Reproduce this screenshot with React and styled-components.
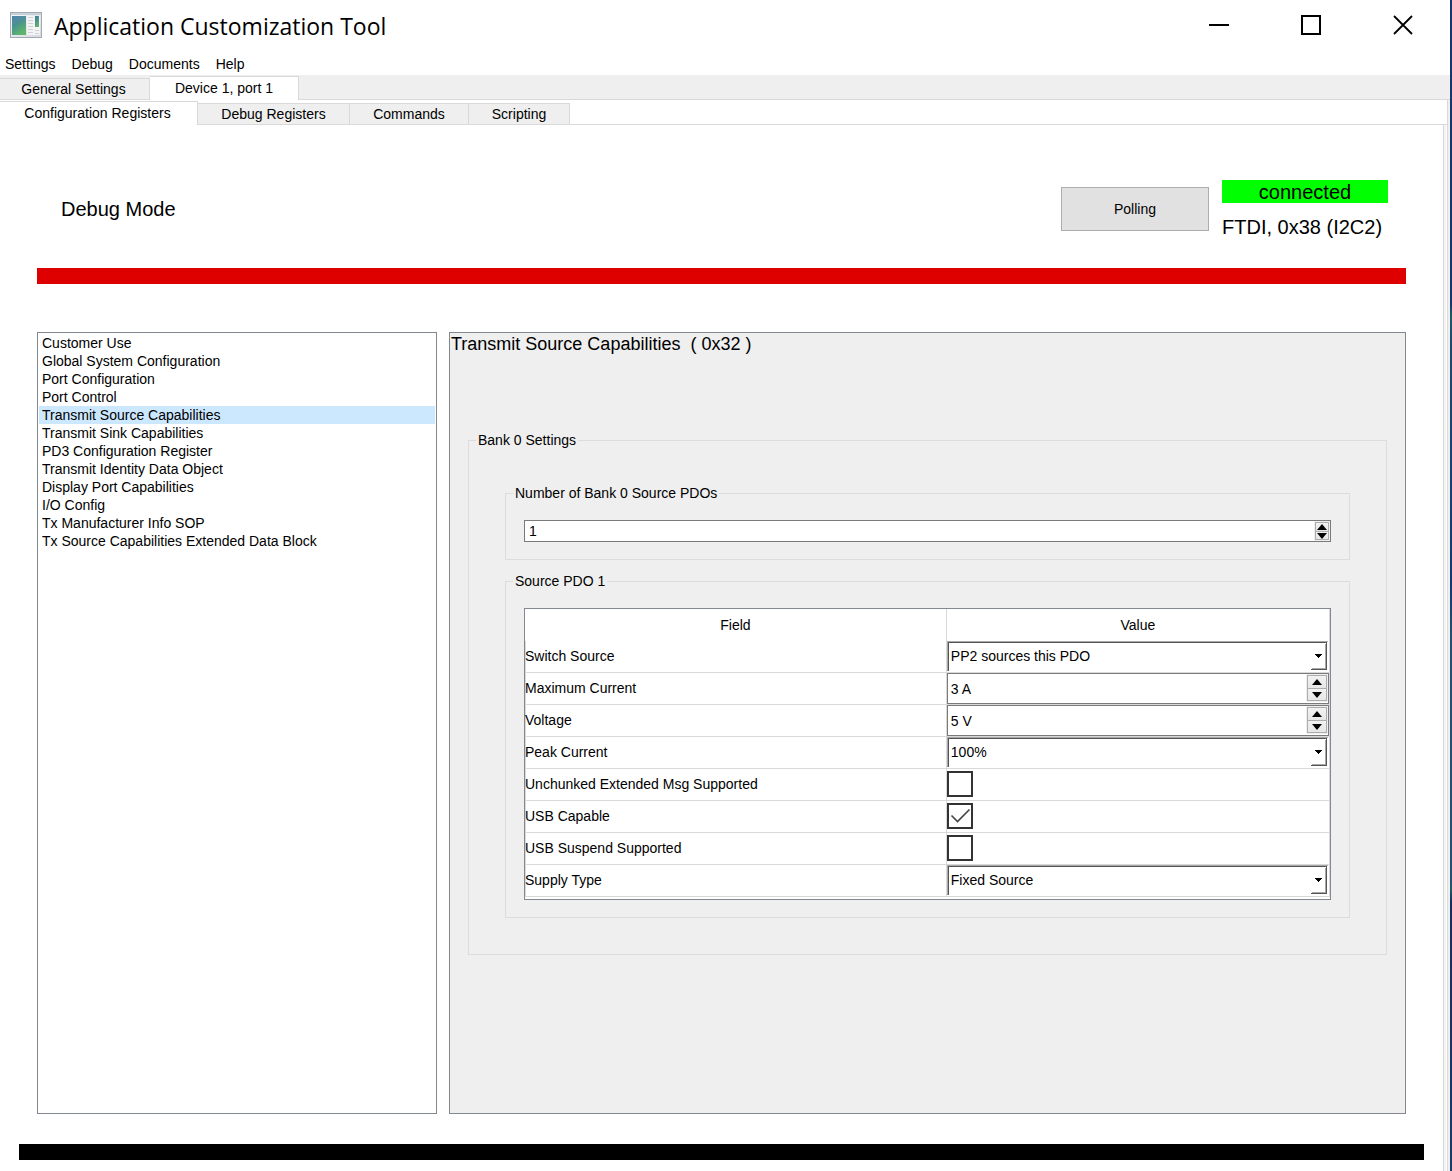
import React, { useState } from "react";
import styled, { createGlobalStyle, css } from "styled-components";

const line = "#d9d9d9";
const face = "#efefef";
const frame = "#828790";

const GlobalStyle = createGlobalStyle`
  * { box-sizing: border-box; }
  body { margin: 0; background: #fff; color: #000; }
  body, button, input, select { font-family: "Liberation Sans", Arial, sans-serif; font-size: 14px; }
  button, input, select { color: inherit; margin: 0; border-radius: 0; }
`;

const Desktop = styled.div`
  display: flex;
  min-height: 100vh;
`;
const Backdrop = styled.div`
  flex: 0 0 2px;
  background: linear-gradient(#17376b, #17376b 26%, #1f5a66 27%, #1d4a6e 29%, #14386f 50%, #254f70 54%, #254f70 75%, #1f5a66 76%, #15305f 77%, #1a3a68);
`;
const Window = styled.div`
  flex: 1;
  min-width: 0;
  display: flex;
  flex-direction: column;
`;

const TitleBar = styled.header`
  display: flex;
  align-items: center;
  height: 50px;
  padding: 0 1px 0 10px;
`;
const Title = styled.h1`
  flex: 1;
  margin: 0 0 0 12px;
  padding-top: 2px;
  font: 400 23px/32px "Open Sans", "Noto Sans", sans-serif;
`;
const Caption = styled.button`
  width: 92px;
  height: 50px;
  padding: 0;
  border: 0;
  background: none;
  svg { display: block; margin: 0 auto; }
`;

const MenuBar = styled.nav`
  display: flex;
  gap: 16px;
  height: 25px;
  padding: 4px 0 0 5px;
`;
const MenuItem = styled.button`
  padding: 0;
  border: 0;
  background: none;
  line-height: 21px;
`;

const TabStrip = styled.div`
  display: flex;
  align-items: flex-end;
  height: 25px;
  background: ${(p) => (p.$shaded ? face : "#fff")};
  box-shadow: inset 0 -1px ${line};
`;
const Tab = styled.button`
  width: ${(p) => p.$width}px;
  height: 22px;
  padding: 0;
  border: 1px solid ${line};
  border-left: 0;
  background: ${face};
  line-height: 20px;
  &:first-child { padding-right: 2px; }
  ${(p) => p.$active && css`
    height: 24px;
    padding-bottom: 2px;
    border-bottom: 0;
    background: #fff;
  `}
`;

const OuterPane = styled.div`
  flex: 1;
  display: flex;
  flex-direction: column;
  margin-right: 2px;
  border-right: 1px solid ${line};
  box-shadow: 2px 0 ${face};
`;
const InnerPane = styled.main`
  flex: 1;
  margin-right: 3px;
  padding: 55px 37px 11px;
  border-right: 1px solid ${line};
  box-shadow: 2px 0 #f3f3f3;
`;

const StatusRow = styled.section`
  display: flex;
  align-items: center;
  height: 58px;
  padding: 0 18px 0 24px;
`;
const Mode = styled.h2`
  flex: 1;
  margin: 0;
  font-size: 20px;
  font-weight: 400;
  line-height: 24px;
`;
const PollButton = styled.button`
  width: 148px;
  height: 44px;
  border: 1px solid #adadad;
  background: #e1e1e1;
`;
const Link = styled.div`
  display: flex;
  flex-direction: column;
  gap: 12px;
  min-width: 166px;
  margin-left: 13px;
  font-size: 20px;
  line-height: 21px;
  white-space: nowrap;
  span { padding-top: 2px; }
`;
const Connected = styled.span`
  background: #0f0;
  text-align: center;
`;
const RedBar = styled.div`
  height: 16px;
  margin-top: 30px;
  background: #de0000;
`;
const BlackBar = styled.footer`
  height: 16px;
  margin: 30px -18px 0;
  background: #000;
`;

const Columns = styled.div`
  display: flex;
  gap: 12px;
  margin-top: 48px;
`;
const RegisterList = styled.nav`
  flex: 0 0 400px;
  padding: 1px;
  border: 1px solid ${frame};
`;
const Register = styled.button`
  display: block;
  width: 100%;
  padding: 0 3px;
  border: 0;
  background: ${(p) => (p.$active ? "#cce8ff" : "none")};
  line-height: 18px;
  text-align: left;
`;
const Detail = styled.section`
  flex: 1;
  min-width: 0;
  min-height: 782px;
  border: 1px solid ${frame};
  background: ${face};
`;
const DetailTitle = styled.h2`
  margin: 0 0 77px;
  padding-left: 1px;
  font-size: 18px;
  font-weight: 400;
  line-height: 22px;
  white-space: pre;
`;
const DetailBody = styled.div`
  padding: 0 18px 18px;
`;

const Group = styled.fieldset`
  min-width: 0;
  margin: 0;
  padding: 0;
  border: 1px solid #dcdcdc;
  & + & { margin-top: 13px; }
`;
const Legend = styled.legend`
  margin-left: 7px;
  padding: 0 2px;
  line-height: 17px;
`;
const GroupBody = styled.div`
  padding: ${(p) => (p.$wide ? "36px" : "18px 18px 17px")};
`;

const SpinFrame = styled.div`
  display: flex;
  align-items: center;
  height: ${(p) => (p.$compact ? 22 : 31)}px;
  padding-right: 1px;
  border: 1px solid #7a7a7a;
  background: #fff;
`;
const SpinInput = styled.input`
  flex: 1;
  min-width: 0;
  height: 18px;
  padding: 0 0 0 ${(p) => (p.$compact ? 4 : 3)}px;
  border: 0;
  outline: 0;
  background: none;
`;
const Steps = styled.div`
  align-self: flex-start;
  display: flex;
  flex-direction: column;
  width: ${(p) => (p.$compact ? 14 : 20)}px;
  height: ${(p) => (p.$compact ? 18 : 26)}px;
  margin-top: 1px;
  border: 1px solid #adadad;
  background: ${face};
  box-shadow: 0 0 0 1px ${face};
`;
const Step = styled.button`
  flex: 0 0 50%;
  display: grid;
  place-items: center;
  min-height: 0;
  padding: 0;
  border: 0;
  background: linear-gradient(#f2f2f2, #e6e6e6);
  & + & { border-top: 1px solid #adadad; }
  svg { display: block; }
`;

const Grid = styled.table`
  width: 100%;
  table-layout: fixed;
  border-collapse: separate;
  border-spacing: 0;
  background: #fff;
`;
const GridFrame = styled.div`
  padding-bottom: 2px;
  border: 1px solid ${frame};
  background: #fff;
`;
const Head = styled.th`
  width: ${(p) => p.$width};
  height: 32px;
  padding: 0;
  border-right: 1px solid ${line};
  font-weight: 400;
`;
const NameCell = styled.td`
  height: 32px;
  padding: 0 0 1px;
  border-right: 1px solid ${line};
  border-bottom: 1px solid ${line};
  box-shadow: inset 1px 0 ${line};
`;
const ValueCell = styled.td`
  height: 32px;
  padding: 0;
  border-right: 1px solid ${line};
  border-bottom: 1px solid ${line};
  vertical-align: top;
`;

const ComboFrame = styled.div`
  display: grid;
  height: 30px;
  margin-right: 1px;
  border: solid #a8a8a8;
  border-width: 1px 0 0 1px;
`;
const Combo = styled.select`
  grid-area: 1 / 1;
  min-width: 0;
  margin-right: 1px;
  padding: 0 20px 3px 2px;
  border: solid #555;
  border-width: 1px 0 0 1px;
  outline: 0;
  appearance: none;
  background: #fff;
`;
const ComboButton = styled.svg`
  grid-area: 1 / 1;
  justify-self: end;
  margin-right: 1px;
  pointer-events: none;
`;

const CheckFrame = styled.div`
  display: grid;
  width: 26px;
  height: 26px;
  margin-top: 2px;
`;
const CheckInput = styled.input`
  grid-area: 1 / 1;
  width: 26px;
  height: 26px;
  appearance: none;
  border: 2px solid #333;
  background: #fff;
  & + svg { visibility: hidden; }
  &:checked + svg { visibility: visible; }
`;
const CheckMark = styled.svg`
  grid-area: 1 / 1;
  pointer-events: none;
`;

function AppIcon() {
  return (
    <svg width="32" height="26" viewBox="0 0 32 26" aria-hidden="true">
      <defs>
        <linearGradient id="screen" x1="0" y1="0" x2="0.5" y2="1">
          <stop offset="0" stopColor="#4477a0" />
          <stop offset="0.5" stopColor="#4a948c" />
          <stop offset="1" stopColor="#5fb56d" />
        </linearGradient>
        <linearGradient id="shell" x1="0" y1="0" x2="1" y2="1">
          <stop offset="0" stopColor="#f7f9fb" />
          <stop offset="1" stopColor="#d5d9de" />
        </linearGradient>
      </defs>
      <rect x="0.5" y="0.5" width="31" height="25" fill="url(#shell)" stroke="#a3aab1" />
      <rect x="1" y="1" width="30" height="2" fill="#c8d0d8" />
      <rect x="2" y="4" width="14" height="19" fill="url(#screen)" />
      <path d="M2 14C5 9 11 8 16 9V4H2Z" fill="#5b91ad" opacity="0.45" />
      <rect x="17" y="4" width="13" height="19" fill="#f4f4f5" />
      <path d="M18 5.5H23M18 8.5H23M18 11.5H23M18 14.5H23M18 17.5H23M18 20.5H23M25 18.5H29M25 21.5H29" stroke="#cfd2d5" />
      <rect x="25" y="4" width="4" height="11" fill="url(#screen)" />
    </svg>
  );
}

function Triangle({ down }) {
  return (
    <svg width="10" height="6" viewBox="0 0 10 6" aria-hidden="true">
      <path d={down ? "M0 0H10L5 6Z" : "M0 6H10L5 0Z"} />
    </svg>
  );
}

function SpinBox({ id, label, initial, unit = "", compact }) {
  const [value, setValue] = useState(initial);
  return (
    <SpinFrame $compact={compact}>
      <SpinInput
        id={id}
        $compact={compact}
        aria-label={label}
        value={`${value}${unit}`}
        onChange={(e) => setValue(parseInt(e.target.value, 10) || 0)}
      />
      <Steps $compact={compact}>
        <Step type="button" aria-label="Increase" onClick={() => setValue(value + 1)}><Triangle /></Step>
        <Step type="button" aria-label="Decrease" onClick={() => setValue(Math.max(0, value - 1))}><Triangle down /></Step>
      </Steps>
    </SpinFrame>
  );
}

function ComboBox({ id, text }) {
  return (
    <ComboFrame>
      <Combo id={id} defaultValue={text}>
        <option>{text}</option>
      </Combo>
      <ComboButton width="16" height="28" viewBox="0 0 16 28" aria-hidden="true">
        <path d="M14.5 2V27M1 26.5H15" fill="none" stroke="#a8a8a8" />
        <path d="M15.5 0V28M0 27.5H16" fill="none" stroke="#555" />
        <path d="M4 12H11V13H10V14H9V15H8V16H7V15H6V14H5V13H4Z" />
      </ComboButton>
    </ComboFrame>
  );
}

function CheckBox({ id, checked }) {
  return (
    <CheckFrame>
      <CheckInput id={id} type="checkbox" defaultChecked={checked} />
      <CheckMark width="26" height="26" viewBox="0 0 26 26" aria-hidden="true">
        <path d="M4.5 12.5L10.5 18.5L22.5 6.5" fill="none" stroke="#444" strokeWidth="1.6" />
      </CheckMark>
    </CheckFrame>
  );
}

const menus = ["Settings", "Debug", "Documents", "Help"];
const registers = [
  "Customer Use",
  "Global System Configuration",
  "Port Configuration",
  "Port Control",
  "Transmit Source Capabilities",
  "Transmit Sink Capabilities",
  "PD3 Configuration Register",
  "Transmit Identity Data Object",
  "Display Port Capabilities",
  "I/O Config",
  "Tx Manufacturer Info SOP",
  "Tx Source Capabilities Extended Data Block",
];
const fields = [
  { id: "switch", name: "Switch Source", combo: "PP2 sources this PDO" },
  { id: "current", name: "Maximum Current", spin: 3, unit: " A" },
  { id: "voltage", name: "Voltage", spin: 5, unit: " V" },
  { id: "peak", name: "Peak Current", combo: "100%" },
  { id: "unchunked", name: "Unchunked Extended Msg Supported", checked: false },
  { id: "usb", name: "USB Capable", checked: true },
  { id: "suspend", name: "USB Suspend Supported", checked: false },
  { id: "supply", name: "Supply Type", combo: "Fixed Source" },
];

function FieldEditor({ field }) {
  if (field.combo) return <ComboBox id={field.id} text={field.combo} />;
  if (field.spin) return <SpinBox id={field.id} initial={field.spin} unit={field.unit} />;
  return <CheckBox id={field.id} checked={field.checked} />;
}

export default function App() {
  const [selected, setSelected] = useState(registers[4]);
  return (
    <>
      <GlobalStyle />
      <Desktop>
        <Window>
          <TitleBar>
            <AppIcon />
            <Title>Application Customization Tool</Title>
            <Caption type="button" aria-label="Minimize">
              <svg width="20" height="20" viewBox="0 0 20 20"><path d="M0 10H20" stroke="#000" strokeWidth="2" /></svg>
            </Caption>
            <Caption type="button" aria-label="Maximize">
              <svg width="20" height="20" viewBox="0 0 20 20"><rect x="1" y="1" width="18" height="18" fill="none" stroke="#000" strokeWidth="2" /></svg>
            </Caption>
            <Caption type="button" aria-label="Close">
              <svg width="20" height="20" viewBox="0 0 20 20"><path d="M1 1L19 19M19 1L1 19" stroke="#000" strokeWidth="1.8" /></svg>
            </Caption>
          </TitleBar>
          <MenuBar>
            {menus.map((m) => <MenuItem key={m} type="button">{m}</MenuItem>)}
          </MenuBar>
          <TabStrip role="tablist" $shaded>
            <Tab type="button" role="tab" $width={150}>General Settings</Tab>
            <Tab type="button" role="tab" aria-selected="true" $width={149} $active>Device 1, port 1</Tab>
          </TabStrip>
          <OuterPane>
            <TabStrip role="tablist">
              <Tab type="button" role="tab" aria-selected="true" $width={198} $active>Configuration Registers</Tab>
              <Tab type="button" role="tab" $width={152}>Debug Registers</Tab>
              <Tab type="button" role="tab" $width={119}>Commands</Tab>
              <Tab type="button" role="tab" $width={101}>Scripting</Tab>
            </TabStrip>
            <InnerPane>
              <StatusRow>
                <Mode>Debug Mode</Mode>
                <PollButton type="button">Polling</PollButton>
                <Link>
                  <Connected>connected</Connected>
                  <span>FTDI, 0x38 (I2C2)</span>
                </Link>
              </StatusRow>
              <RedBar />
              <Columns>
                <RegisterList>
                  {registers.map((r) => (
                    <Register key={r} type="button" $active={r === selected} onClick={() => setSelected(r)}>{r}</Register>
                  ))}
                </RegisterList>
                <Detail>
                  <DetailTitle>{"Transmit Source Capabilities  ( 0x32 )"}</DetailTitle>
                  <DetailBody>
                    <Group>
                      <Legend>Bank 0 Settings</Legend>
                      <GroupBody $wide>
                        <Group>
                          <Legend>Number of Bank 0 Source PDOs</Legend>
                          <GroupBody>
                            <SpinBox id="count" label="Number of Bank 0 Source PDOs" initial={1} compact />
                          </GroupBody>
                        </Group>
                        <Group>
                          <Legend>Source PDO 1</Legend>
                          <GroupBody>
                            <GridFrame>
                              <Grid>
                                <thead>
                                  <tr>
                                    <Head $width="52.4%">Field</Head>
                                    <Head $width="47.6%">Value</Head>
                                  </tr>
                                </thead>
                                <tbody>
                                  {fields.map((f) => (
                                    <tr key={f.id}>
                                      <NameCell><label htmlFor={f.id}>{f.name}</label></NameCell>
                                      <ValueCell><FieldEditor field={f} /></ValueCell>
                                    </tr>
                                  ))}
                                </tbody>
                              </Grid>
                            </GridFrame>
                          </GroupBody>
                        </Group>
                      </GroupBody>
                    </Group>
                  </DetailBody>
                </Detail>
              </Columns>
              <BlackBar />
            </InnerPane>
          </OuterPane>
        </Window>
        <Backdrop />
      </Desktop>
    </>
  );
}
